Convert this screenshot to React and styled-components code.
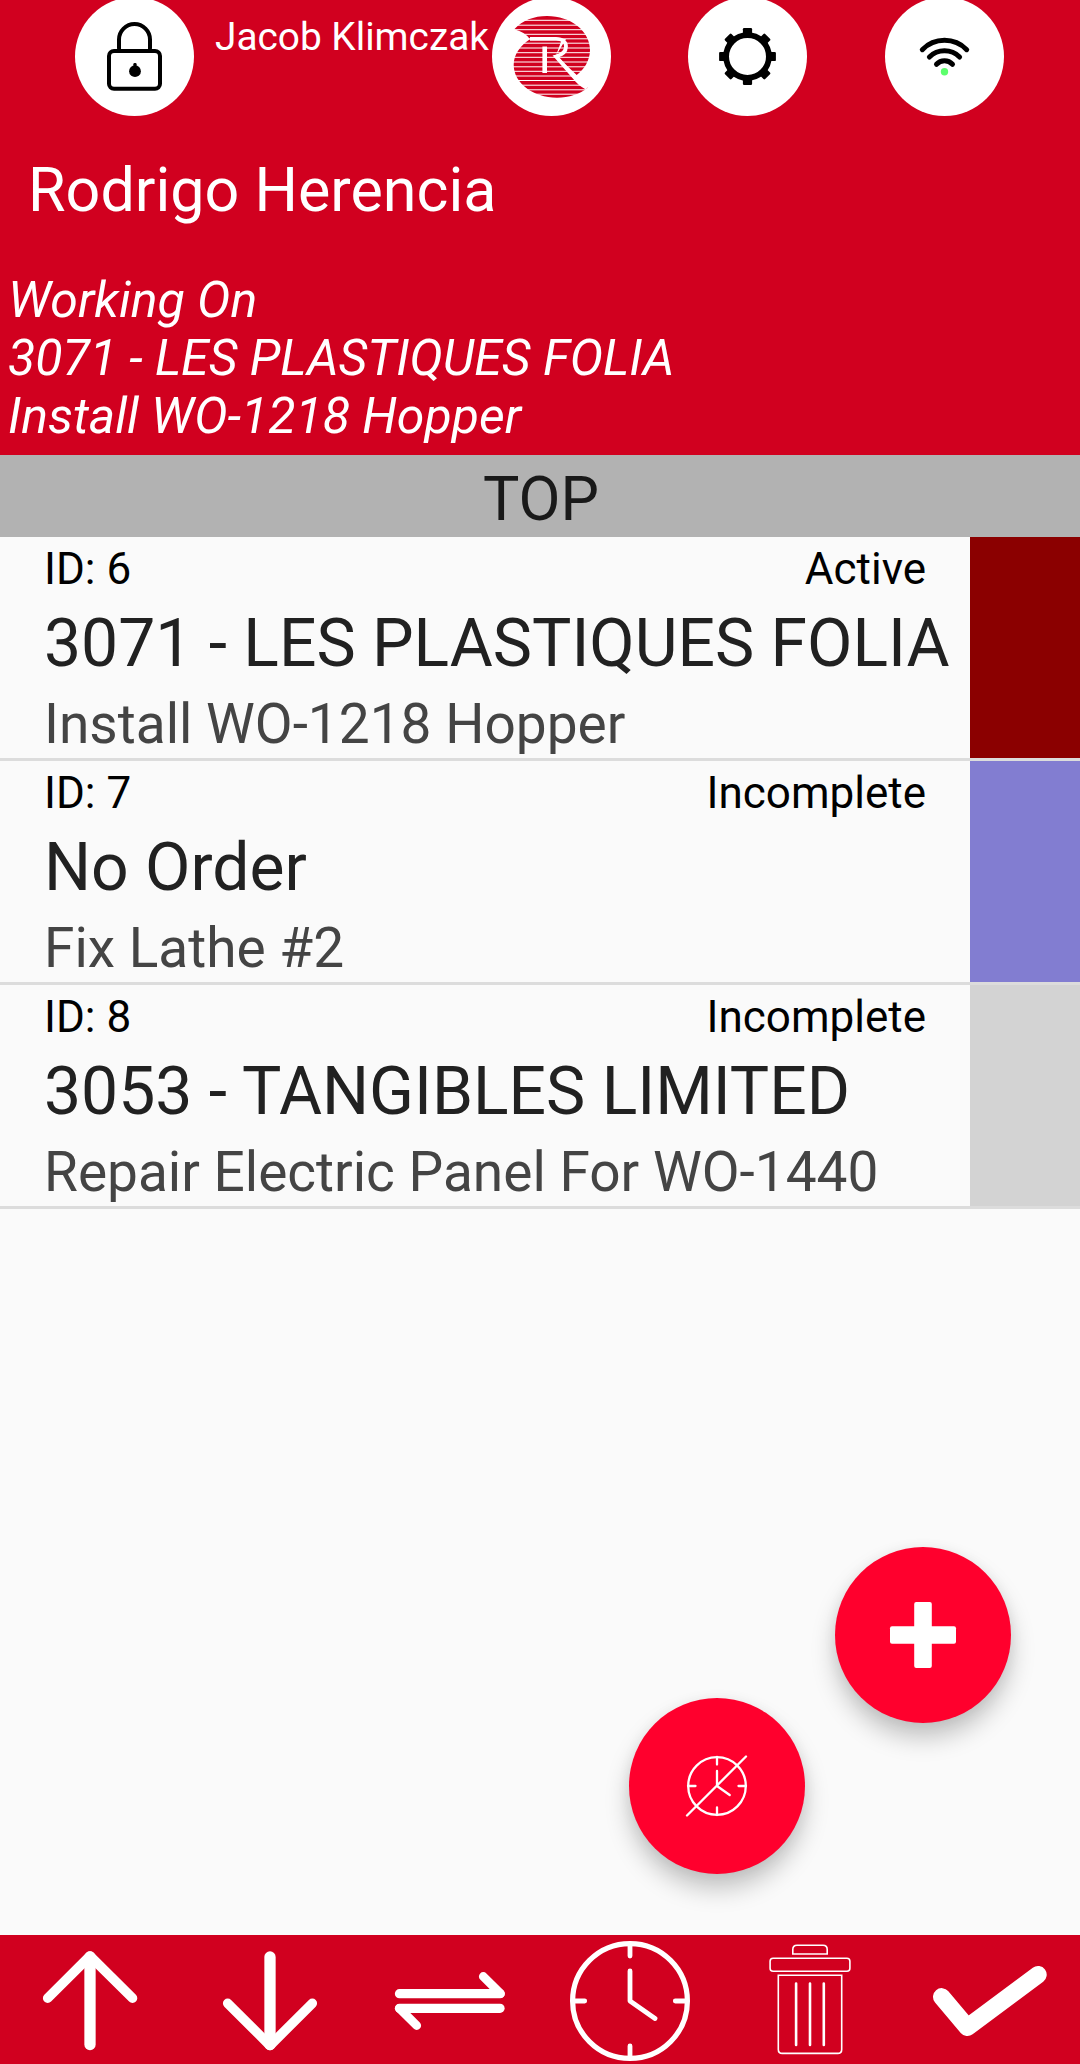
import React from "react";
import styled, { createGlobalStyle } from "styled-components";

const GlobalStyle = createGlobalStyle`
  * { box-sizing: border-box; }
  body { margin: 0; background: #fafafa; }
`;

const Screen = styled.div`
  position: relative;
  width: 1080px;
  height: 2064px;
  overflow: hidden;
  display: flex;
  flex-direction: column;
  background: #fafafa;
  font-family: Roboto, "Liberation Sans", sans-serif;
`;

const Header = styled.header`
  flex: none;
  height: 455px;
  background: #d1001f;
  color: #fff;
`;

const TopBar = styled.div`
  display: grid;
  grid-template-columns: 119px 298px 196px 197px 119px;
  margin-top: -3px;
  padding-left: 75px;
  height: 119px;
`;

const RoundButton = styled.button`
  width: 119px;
  height: 119px;
  padding: 0;
  border: 0;
  border-radius: 50%;
  background: #fff;
  svg { display: block; }
`;

const UserName = styled.div`
  padding: 17px 0 0 21px;
  font-size: 38.8px;
  line-height: 45px;
  white-space: nowrap;
`;

const EmployeeName = styled.h1`
  margin: 39px 0 0 28px;
  font-size: 61px;
  line-height: 71px;
  font-weight: 400;
`;

const WorkingOn = styled.div`
  margin: 45px 0 0 8px;
  font-size: 50px;
  line-height: 58px;
  font-style: italic;
  white-space: nowrap;
`;

const SectionTitle = styled.div`
  flex: none;
  height: 82px;
  padding: 9px 0 0 2px;
  background: #b2b2b2;
  color: #191919;
  font-size: 61px;
  line-height: 71px;
  text-align: center;
`;

const TaskRow = styled.div`
  flex: none;
  display: flex;
  height: 224px;
  border-bottom: 3px solid #dcdcdc;
`;

const TaskBody = styled.div`
  width: 970px;
  padding: 6px 0 0 44px;
  white-space: nowrap;
`;

const TaskMeta = styled.div`
  display: flex;
  justify-content: space-between;
  padding-right: 44px;
  color: #000;
  font-size: 44px;
  line-height: 52px;
`;

const TaskTitle = styled.div`
  margin-top: 10px;
  color: #212121;
  font-size: 66px;
  line-height: 78px;
`;

const TaskDetail = styled.div`
  margin-top: 9px;
  color: #444;
  font-size: 55px;
  line-height: 64px;
`;

const StatusStrip = styled.div`
  width: 110px;
  background: ${(p) => p.$color};
`;

const Spacer = styled.div`
  flex: 1;
`;

const Fab = styled.button`
  position: absolute;
  left: ${(p) => p.$left}px;
  top: ${(p) => p.$top}px;
  width: 176px;
  height: 176px;
  padding: 0;
  border: 0;
  border-radius: 50%;
  background: #ff002d;
  box-shadow: 0 15px 24px rgba(0, 0, 0, 0.22), 0 2px 14px rgba(0, 0, 0, 0.06);
  svg { display: block; }
`;

const BottomBar = styled.nav`
  flex: none;
  display: grid;
  grid-template-columns: repeat(6, 180px);
  height: 129px;
  background: #d1001f;
`;

const BarButton = styled.button`
  padding: 0;
  border: 0;
  background: none;
  svg { display: block; }
`;

const RoundIcon = ({ children }) => (
  <svg width="119" height="119" viewBox="0 0 119 119" fill="none">{children}</svg>
);

const BarIcon = ({ children }) => (
  <svg width="180" height="129" viewBox="0 0 180 129" fill="none" stroke="#fff" strokeLinecap="round" strokeLinejoin="round">
    {children}
  </svg>
);

const LockIcon = () => (
  <RoundIcon>
    <rect x="34" y="54" width="51" height="37.7" rx="5" stroke="#000" strokeWidth="4" />
    <path d="M46 53.7Q44 53.7 44 51V42.5a15.5 15.5 0 0 1 31 0V51Q75 53.7 73 53.7" stroke="#000" strokeWidth="4" />
    <circle cx="60" cy="74.2" r="5.9" fill="#000" />
    <rect x="58.4" y="66" width="3.2" height="5" rx="1.2" fill="#000" />
  </RoundIcon>
);

const stripeRows = [23.3, 28.2, 32.7, 37.3, 41.8, 46.2, 51, 55.7, 60.3, 65, 69.8, 74.3, 79, 83.5, 88.2, 92.8, 97.2];

const LogoIcon = () => (
  <RoundIcon>
    <path
      d="M22.3 32.3C30 23.5 42 19 55 19C79 19 98 34 98 53C98 63.5 92 72.5 84.7 78L64 58.5L74 42L38 42.3Q33 35 22.3 32.3Z"
      fill="#d1001f"
    />
    <path
      d="M38 42.3C28 48.5 21.7 58 21.7 68C21.7 86 41 100.7 65 100.7C77 100.7 88 97 95.7 90.7Q88 89 83 81.3L64 58.5L70 42Z"
      fill="#d1001f"
    />
    {stripeRows.map((y) => (
      <path key={y} d={`M20 ${y}H99`} stroke="#fff" strokeWidth="1" />
    ))}
    <path d="M50.4 49.5h4.6v26.5h-4.6z" fill="#fff" />
    <path
      d="M38 41.8H64C71 41.8 74 45.5 74 49.5C74 55.5 69.5 58 64 59.5L82 80Q87 87 95 91"
      stroke="#fff"
      strokeWidth="3.8"
    />
  </RoundIcon>
);

const GearIcon = () => (
  <RoundIcon>
    <circle cx="59.5" cy="59.5" r="21.4" stroke="#000" strokeWidth="5.8" />
    {[0, 45, 90, 135, 180, 225, 270, 315].map((a) => (
      <rect key={a} x="54.9" y="31.1" width="9.2" height="7" rx="1.2" fill="#000" transform={`rotate(${a} 59.5 59.5)`} />
    ))}
  </RoundIcon>
);

const WifiIcon = () => (
  <RoundIcon>
    <g stroke="#000" strokeWidth="5" strokeLinecap="round">
      <path d="M37.3 52.7A31 31 0 0 1 81.7 52.7" />
      <path d="M44.4 60A21.5 21.5 0 0 1 74.6 60" />
      <path d="M51.5 67.3A10.8 10.8 0 0 1 67.5 67.3" />
    </g>
    <circle cx="59.5" cy="74.7" r="3.7" fill="#5cff6c" />
  </RoundIcon>
);

const PlusIcon = () => (
  <svg width="176" height="176" viewBox="0 0 176 176" fill="#fff">
    <rect x="55" y="79.2" width="66" height="17.6" rx="2" />
    <rect x="79.2" y="55" width="17.6" height="66" rx="2" />
  </svg>
);

const ClockOffIcon = () => (
  <svg width="176" height="176" viewBox="0 0 176 176" fill="none" stroke="#fff" strokeWidth="2.3" strokeLinecap="round" strokeLinejoin="round">
    <circle cx="88" cy="88" r="28.8" />
    <path d="M88 59v7.5M88 109.5v7.5M59 88h7.5M109.5 88h7.5M88 73v15l12.7 9M58 117.5L117 58.5" />
  </svg>
);

const UpIcon = () => (
  <BarIcon>
    <path d="M90 22V109.5" strokeWidth="11.3" />
    <path d="M47.7 63.2L90 21L132.5 63.2" strokeWidth="9.6" />
  </BarIcon>
);

const DownIcon = () => (
  <BarIcon>
    <path d="M90 22V109.5" strokeWidth="11.3" />
    <path d="M47.7 68.3L90 110.5L132.3 68.3" strokeWidth="9.6" />
  </BarIcon>
);

const SwapIcon = () => (
  <BarIcon>
    <path d="M39.5 58.7H140" strokeWidth="9.3" />
    <path d="M123.3 41.5L140.5 58.7" strokeWidth="8.8" />
    <path d="M140 73.3H39.5" strokeWidth="9.3" />
    <path d="M39.5 73.3L56.7 90.5" strokeWidth="8.8" />
  </BarIcon>
);

const ClockIcon = () => (
  <BarIcon>
    <circle cx="90" cy="66" r="57.4" strokeWidth="5.2" />
    <path d="M90 9V21M90 111V123M33 66H44.7M135.3 66H147M90 36V66L115 83.5" strokeWidth="4.8" />
  </BarIcon>
);

const TrashIcon = () => (
  <BarIcon>
    <g strokeWidth="1.6" strokeLinejoin="miter">
      <path d="M72.8 19V14.5Q72.8 10.2 77 10.2H103Q107.2 10.2 107.2 14.5V19Z" />
      <rect x="50.1" y="23.2" width="79.8" height="13" rx="3" />
      <path d="M58.3 40.2H121.7V114.5Q121.7 118.4 117.8 118.4H62.2Q58.3 118.4 58.3 114.5Z" />
    </g>
    <path d="M76.1 48.5V110M90 48.5V110M103.8 48.5V110" strokeWidth="2.6" />
  </BarIcon>
);

const CheckIcon = () => (
  <BarIcon>
    <path d="M41.7 61.8L67.4 92.3L138 39.7" strokeWidth="17.4" />
  </BarIcon>
);

const tasks = [
  { id: 6, status: "Active", title: "3071 - LES PLASTIQUES FOLIA", detail: "Install WO-1218 Hopper", color: "#8b0000" },
  { id: 7, status: "Incomplete", title: "No Order", detail: "Fix Lathe #2", color: "#827dd1" },
  { id: 8, status: "Incomplete", title: "3053 - TANGIBLES LIMITED", detail: "Repair Electric Panel For WO-1440", color: "#d3d3d3" },
];

const barActions = [
  ["up", UpIcon],
  ["down", DownIcon],
  ["swap", SwapIcon],
  ["clock", ClockIcon],
  ["trash", TrashIcon],
  ["check", CheckIcon],
];

export default function App() {
  return (
    <>
      <GlobalStyle />
      <Screen>
        <Header>
          <TopBar>
            <RoundButton><LockIcon /></RoundButton>
            <UserName>Jacob Klimczak</UserName>
            <RoundButton><LogoIcon /></RoundButton>
            <RoundButton><GearIcon /></RoundButton>
            <RoundButton><WifiIcon /></RoundButton>
          </TopBar>
          <EmployeeName>Rodrigo Herencia</EmployeeName>
          <WorkingOn>
            <div>Working On</div>
            <div>3071 - LES PLASTIQUES FOLIA</div>
            <div>Install WO-1218 Hopper</div>
          </WorkingOn>
        </Header>
        <SectionTitle>TOP</SectionTitle>
        {tasks.map((t) => (
          <TaskRow key={t.id}>
            <TaskBody>
              <TaskMeta>
                <span>ID: {t.id}</span>
                <span>{t.status}</span>
              </TaskMeta>
              <TaskTitle>{t.title}</TaskTitle>
              <TaskDetail>{t.detail}</TaskDetail>
            </TaskBody>
            <StatusStrip $color={t.color} />
          </TaskRow>
        ))}
        <Spacer />
        <BottomBar>
          {barActions.map(([name, Icon]) => (
            <BarButton key={name}><Icon /></BarButton>
          ))}
        </BottomBar>
        <Fab $left={835} $top={1547}><PlusIcon /></Fab>
        <Fab $left={629} $top={1698}><ClockOffIcon /></Fab>
      </Screen>
    </>
  );
}
